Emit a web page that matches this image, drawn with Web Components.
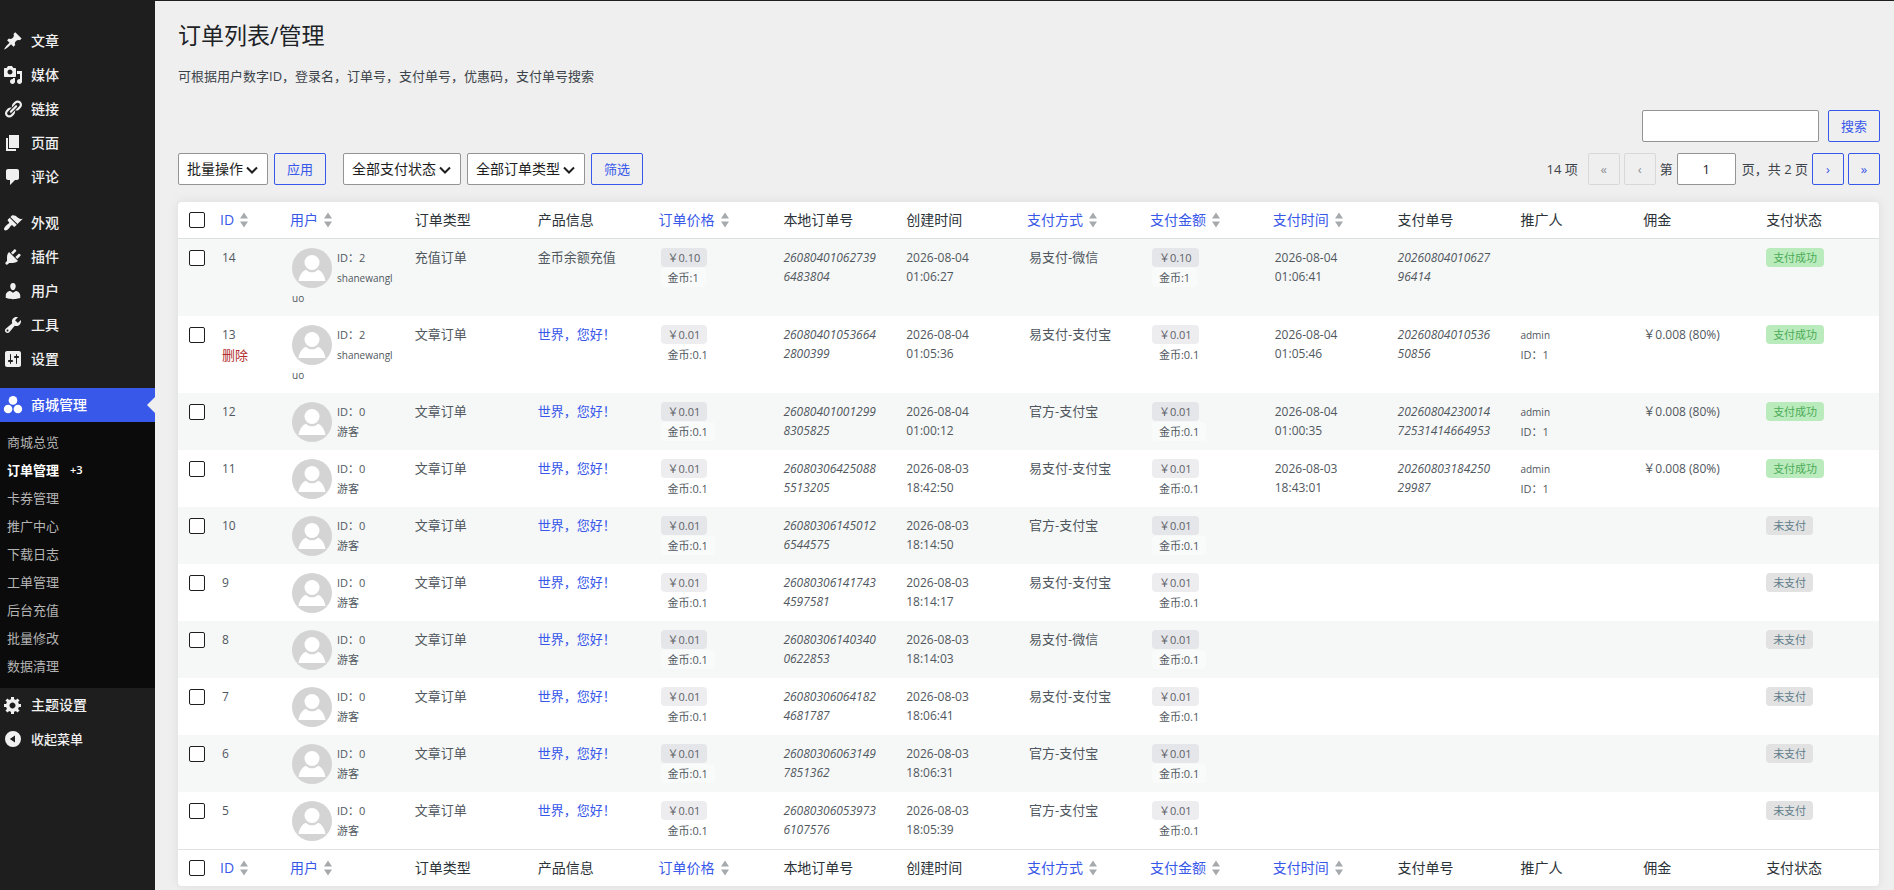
<!DOCTYPE html>
<html lang="zh-CN">
<head>
<meta charset="utf-8">
<meta name="viewport" content="width=device-width, initial-scale=1">
<title>订单列表/管理</title>
<style>
  body {
    margin: 0;
    background: #efefef;
    color: #3c434a;
    font: 13px/20px "Open Sans", "Noto Sans CJK SC", sans-serif;
  }
</style>
</head>
<body>
<admin-shell>
  <admin-menu slot="menu"></admin-menu>
  <page-header heading="订单列表/管理">可根据用户数字ID，登录名，订单号，支付单号，优惠码，支付单号搜索</page-header>
  <search-box></search-box>
  <order-toolbar></order-toolbar>
  <order-table></order-table>
</admin-shell>

<script>
/* Общие стили контролов */
const controls = `
  *, *::before { box-sizing: border-box; }
  button, input, select { font: inherit; margin: 0; }
  button {
    height: 32px;
    padding: 0 12px;
    border: 1px solid #3858e9;
    border-radius: 2px;
    background: transparent;
    color: #3858e9;
    cursor: pointer;
  }
  button:disabled { border-color: #d8d8da; color: #8e9297; cursor: default; }
  input[type=text], input[type=search], select {
    height: 32px;
    border: 1px solid #949494;
    border-radius: 2px;
    background: #fff;
    color: #1e1e1e;
  }
`;

const icons = {
  post: '<path d="M10.44 3.02l1.82-1.82 6.36 6.35-1.83 1.82c-1.05-.68-2.48-.57-3.41.36l-.75.75c-.92.93-1.04 2.35-.35 3.41l-1.83 1.82-2.41-2.41-2.8 2.79c-.42.42-3.38 2.71-3.8 2.29s1.86-3.39 2.28-3.81l2.79-2.79L4.1 9.36l1.83-1.82c1.05.69 2.48.57 3.4-.36l.75-.75c.93-.92 1.05-2.35.36-3.41z"/>',
  media: '<path d="M13 11V4c0-.55-.45-1-1-1h-1.67L9 1H5L3.67 3H2c-.55 0-1 .45-1 1v7c0 .55.45 1 1 1h10c.55 0 1-.45 1-1zM7 4.5c1.38 0 2.5 1.12 2.5 2.5S8.38 9.5 7 9.5 4.5 8.38 4.5 7 5.62 4.5 7 4.5zM14 6h5v10.5c0 1.38-1.12 2.5-2.5 2.5S14 17.88 14 16.5s1.12-2.5 2.5-2.5c.17 0 .34.02.5.05V9h-3V6zm-4 8.05V13h2v3.5c0 1.38-1.12 2.5-2.5 2.5S7 17.88 7 16.5 8.12 14 9.5 14c.17 0 .34.02.5.05z"/>',
  links: '<path d="M17.74 2.76c1.68 1.69 1.68 4.41 0 6.1l-1.53 1.52c-1.12 1.12-2.7 1.47-4.14 1.09l2.62-2.61.76-.77.76-.76c.84-.84.84-2.2 0-3.04-.84-.85-2.2-.85-3.04 0l-.77.76-3.38 3.38c-.37-1.44-.02-3.02 1.1-4.14l1.52-1.53c1.69-1.68 4.42-1.68 6.1 0zM8.59 13.43l5.34-5.34c.42-.42.42-1.1 0-1.52-.44-.43-1.13-.39-1.53 0l-5.33 5.34c-.42.42-.42 1.1 0 1.52.44.43 1.13.39 1.52 0zm-.76 2.29l4.14-4.15c.38 1.44.03 3.02-1.09 4.14l-1.52 1.53c-1.69 1.68-4.41 1.68-6.1 0-1.68-1.68-1.68-4.42 0-6.1l1.53-1.52c1.12-1.12 2.7-1.47 4.14-1.1l-4.14 4.15c-.85.84-.85 2.2 0 3.05.84.84 2.2.84 3.04 0z"/>',
  page: '<path d="M6 15V2h10v13H6zm-1 1h8v2H3V5h2v11z"/>',
  comments: '<path d="M5 2h9c1.1 0 2 .9 2 2v7c0 1.1-.9 2-2 2h-2l-5 5v-5H5c-1.1 0-2-.9-2-2V4c0-1.1.9-2 2-2z"/>',
  appearance: '<path d="M14.48 11.06L7.41 3.99l1.5-1.5c.5-.56 2.3-.47 3.51.32 1.21.8 1.43 1.28 2.91 2.1 1.18.64 2.45 1.26 4.45.85zm-.71.71L6.7 4.7 4.93 6.47c-.39.39-.39 1.02 0 1.41l1.06 1.06c.39.39.39 1.03 0 1.42-.6.6-1.43 1.11-2.21 1.69-.35.26-.7.53-1.01.84C1.43 14.23.4 16.08 1.4 17.07c.99 1 2.84-.03 4.18-1.36.31-.31.58-.66.85-1.02.57-.78 1.08-1.61 1.69-2.21.39-.39 1.02-.39 1.41 0l1.06 1.06c.39.39 1.02.39 1.41 0z"/>',
  plugins: '<path d="M13.11 4.36L9.87 7.6 8 5.73l3.24-3.24c.35-.34 1.05-.2 1.56.32.52.51.66 1.21.31 1.55zm-8 1.77l.91-1.12 9.01 9.01-1.19.84c-.71.71-2.63 1.16-3.82 1.16H6.14L4.9 17.26c-.59.59-1.54.59-2.12 0-.59-.58-.59-1.53 0-2.12l1.24-1.24v-3.88c0-1.13.4-3.19 1.09-3.89zm7.26 3.97l3.24-3.24c.34-.35 1.04-.21 1.55.31.52.51.66 1.21.31 1.55l-3.24 3.25z"/>',
  users: '<path d="M10 9.25c-2.27 0-2.73-3.44-2.73-3.44C7 4.02 7.82 2 9.97 2c2.16 0 2.98 2.02 2.71 3.81 0 0-.41 3.44-2.68 3.44zm0 2.57L12.72 10c2.39 0 4.52 2.33 4.52 4.53v2.49s-3.65 1.13-7.24 1.13c-3.65 0-7.24-1.13-7.24-1.13v-2.49c0-2.25 1.94-4.48 4.47-4.48z"/>',
  tools: '<path d="M16.68 9.77c-1.34 1.34-3.3 1.67-4.95.99l-5.41 6.52c-.99.99-2.59.99-3.58 0s-.99-2.59 0-3.57l6.52-5.42c-.68-1.65-.35-3.61.99-4.95 1.28-1.28 3.12-1.62 4.72-1.06l-2.89 2.89 2.82 2.82 2.86-2.87c.53 1.58.18 3.39-1.08 4.65zM3.81 16.21c.4.39 1.04.39 1.43 0 .4-.4.4-1.04 0-1.43-.39-.4-1.03-.4-1.43 0-.39.39-.39 1.03 0 1.43z"/>',
  settings: '<path d="M18 16V4c0-1.1-.9-2-2-2H4c-1.1 0-2 .9-2 2v12c0 1.1.9 2 2 2h12c1.1 0 2-.9 2-2zM8 11h1c.55 0 1 .45 1 1s-.45 1-1 1H8v1.5c0 .28-.22.5-.5.5s-.5-.22-.5-.5V13H6c-.55 0-1-.45-1-1s.45-1 1-1h1V5.5c0-.28.22-.5.5-.5s.5.22.5.5V11zm5-2h-1c-.55 0-1-.45-1-1s.45-1 1-1h1V5.5c0-.28.22-.5.5-.5s.5.22.5.5V7h1c.55 0 1 .45 1 1s-.45 1-1 1h-1v5.500c0 .28-.22.5-.5.5s-.5-.22-.5-.5V9z"/>',
  shop: '<circle cx="10" cy="5.4" r="4.3"/><circle cx="5.1" cy="14" r="4.3"/><circle cx="14.9" cy="14" r="4.3"/>',
  generic: '<path d="M18 12h-2.18c-.17.7-.44 1.35-.81 1.93l1.54 1.54-2.1 2.1-1.54-1.54c-.58.36-1.23.63-1.91.79V19H8v-2.18c-.68-.16-1.33-.43-1.91-.79l-1.54 1.54-2.12-2.12 1.54-1.54c-.36-.58-.63-1.23-.79-1.91H1V9.03h2.17c.16-.7.44-1.35.8-1.94L2.43 5.55l2.1-2.1 1.54 1.54c.58-.37 1.24-.64 1.93-.81V2h3v2.18c.68.16 1.33.43 1.91.79l1.54-1.54 2.12 2.12-1.54 1.54c.36.59.64 1.24.8 1.94H18V12zm-8.500 1.500c1.66 0 3-1.34 3-3s-1.34-3-3-3-3 1.34-3 3 1.34 3 3 3z"/>',
  collapse: '<path fill-rule="evenodd" d="M10 2a8 8 0 1 0 0 16 8 8 0 0 0 0-16zm2 4.6v6.8L6.8 10z"/>',
};

const define = (name, html, setup) => {
  const template = document.createElement('template');
  template.innerHTML = html;
  customElements.define(name, class extends HTMLElement {
    constructor() {
      super();
      this.attachShadow({ mode: 'open' }).append(template.content.cloneNode(true));
    }
    connectedCallback() {
      setup?.(this, this.shadowRoot);
    }
  });
};

define('admin-shell', `
  <style>
    :host { display: flex; min-height: 100vh; box-sizing: border-box; border-top: 1px solid #1e1e1e; }
    aside { flex: none; width: 155px; background: #1e1e1e; }
    main { flex: 1; min-width: 0; padding: 19px 14px 0 23px; }
  </style>
  <aside><slot name="menu"></slot></aside>
  <main><slot></slot></main>
`);

define('menu-item', `
  <style>
    :host { display: block; }
    a {
      position: relative;
      display: flex;
      align-items: center;
      gap: 8px;
      height: 34px;
      padding-left: 3px;
      color: #f0f0f1;
      font-size: 14px;
      font-weight: 500;
      text-decoration: none;
    }
    svg { width: 20px; height: 20px; fill: currentColor; }
    :host([current]) a { background: #3858e9; color: #fff; }
    :host([current]) a::after {
      content: "";
      position: absolute;
      right: 0;
      border: 8px solid transparent;
      border-right-color: #efefef;
      border-left: 0;
    }
    :host([plain]) a { font-size: 13px; }
  </style>
  <a href="#"><svg viewBox="0 0 20 20" aria-hidden="true"></svg><slot></slot></a>
`, (el, root) => {
  root.querySelector('svg').innerHTML = icons[el.getAttribute('icon')] || '';
});

define('submenu-item', `
  <style>
    :host { display: block; }
    a {
      display: flex;
      align-items: center;
      gap: 11px;
      height: 28px;
      padding-left: 7px;
      color: #b4b4b4;
      text-decoration: none;
    }
    :host([current]) a { color: #fff; font-weight: 700; }
    ::slotted(small) { font-size: 11px; font-weight: 600; }
  </style>
  <a href="#"><slot></slot><slot name="count"></slot></a>
`);

define('admin-menu', `
  <style>
    :host { display: block; padding-top: 23px; }
    hr { height: 12px; margin: 0; border: 0; }
    .submenu { padding: 6px 0 8px; background: #0b0b0b; }
  </style>
  <nav aria-label="主菜单">
    <menu-item icon="post">文章</menu-item>
    <menu-item icon="media">媒体</menu-item>
    <menu-item icon="links">链接</menu-item>
    <menu-item icon="page">页面</menu-item>
    <menu-item icon="comments">评论</menu-item>
    <hr>
    <menu-item icon="appearance">外观</menu-item>
    <menu-item icon="plugins">插件</menu-item>
    <menu-item icon="users">用户</menu-item>
    <menu-item icon="tools">工具</menu-item>
    <menu-item icon="settings">设置</menu-item>
    <hr>
    <menu-item icon="shop" current>商城管理</menu-item>
    <div class="submenu">
      <submenu-item>商城总览</submenu-item>
      <submenu-item current>订单管理<small slot="count">+3</small></submenu-item>
      <submenu-item>卡券管理</submenu-item>
      <submenu-item>推广中心</submenu-item>
      <submenu-item>下载日志</submenu-item>
      <submenu-item>工单管理</submenu-item>
      <submenu-item>后台充值</submenu-item>
      <submenu-item>批量修改</submenu-item>
      <submenu-item>数据清理</submenu-item>
    </div>
    <menu-item icon="generic">主题设置</menu-item>
    <menu-item icon="collapse" plain>收起菜单</menu-item>
  </nav>
`);

define('page-header', `
  <style>
    :host { display: block; }
    h1 { margin: 0; color: #1d2327; font-size: 23px; line-height: 30px; font-weight: 400; }
    p { margin: 16px 0 0; }
  </style>
  <h1></h1>
  <p><slot></slot></p>
`, (el, root) => {
  root.querySelector('h1').textContent = el.getAttribute('heading');
});

define('search-box', `
  <style>
    ${controls}
    :host { display: block; margin-top: 24px; }
    form { display: flex; justify-content: flex-end; gap: 9px; }
    input { width: 177px; padding: 0 8px; }
  </style>
  <form role="search">
    <input type="search" aria-label="搜索订单">
    <button type="button">搜索</button>
  </form>
`);

define('drop-down', `
  <style>
    ${controls}
    :host { display: inline-block; position: relative; }
    select { appearance: none; padding: 0 24px 0 8px; font-size: 14px; }
    svg {
      position: absolute;
      top: 11px;
      right: 10px;
      width: 12px;
      height: 12px;
      fill: none;
      stroke: #1e1e1e;
      stroke-width: 2;
      pointer-events: none;
    }
  </style>
  <select><option></option></select>
  <svg viewBox="0 0 12 12" aria-hidden="true"><path d="M1 3.500l5 5 5-5"/></svg>
`, (el, root) => {
  root.querySelector('option').textContent = el.getAttribute('value');
  root.querySelector('select').setAttribute('aria-label', el.getAttribute('label'));
});

define('page-nav', `
  <style>
    ${controls}
    :host { display: flex; align-items: center; gap: 4px; }
    .total { margin-right: 6px; }
    button { width: 32px; padding: 0; }
    input { width: 59px; text-align: center; }
    .of { margin-left: 2px; }
  </style>
  <span class="total">14 项</span>
  <button type="button" aria-label="首页" disabled>«</button>
  <button type="button" aria-label="上一页" disabled>‹</button>
  <label for="page">第</label>
  <input type="text" id="page" value="1">
  <span class="of">页，共 2 页</span>
  <button type="button" aria-label="下一页">›</button>
  <button type="button" aria-label="尾页">»</button>
`);

define('order-toolbar', `
  <style>
    ${controls}
    :host { display: flex; justify-content: space-between; margin: 11px 0 17px; }
    div, section { display: flex; gap: 6px; }
    section { gap: 17px; }
  </style>
  <section>
    <div>
      <drop-down label="批量操作" value="批量操作"></drop-down>
      <button type="button">应用</button>
    </div>
    <div>
      <drop-down label="支付状态" value="全部支付状态"></drop-down>
      <drop-down label="订单类型" value="全部订单类型"></drop-down>
      <button type="button">筛选</button>
    </div>
  </section>
  <page-nav></page-nav>
`);

define('tag-chip', `
  <style>
    :host {
      display: table;
      height: 19px;
      padding: 0 7px;
      border-radius: 4px;
      background: rgba(116, 119, 140, .13);
      color: #5d6167;
      font-size: 11px;
      line-height: 19px;
      white-space: nowrap;
    }
    :host([kind=coin]) { margin-top: 1px; background: rgba(255, 255, 255, .4); color: #50575e; }
    :host([kind=paid]) { background: #b9ebbc; color: #4cab58; }
    :host([kind=unpaid]) { background: #e2e2e2; color: #607d8b; }
  </style>
  <slot></slot>
`);

define('user-card', `
  <style>
    :host { display: flow-root; font-size: 11px; line-height: 20px; }
    svg { float: left; width: 40px; height: 40px; margin-right: 5px; }
    .name { word-break: break-all; }
    .latin { font-size: 10px; }
  </style>
  <svg viewBox="0 0 40 40" aria-hidden="true">
    <circle cx="20" cy="20" r="20" fill="#d4d4d4"/>
    <circle cx="20" cy="14.5" r="7.5" fill="#fff"/>
    <path d="M6.5 33c1-5.5 3.8-9.8 7.2-11.2 3.8 3.4 8.8 3.4 12.6 0 3.4 1.4 6.2 5.7 7.2 11.2z" fill="#fff"/>
  </svg>
  <div class="uid"></div>
  <div class="name"></div>
`, (el, root) => {
  const name = root.querySelector('.name');
  root.querySelector('.uid').textContent = 'ID：' + el.getAttribute('uid');
  name.textContent = el.getAttribute('name');
  name.classList.toggle('latin', /^\w+$/.test(name.textContent));
});

/* [заголовок, сортировка] */
const columns = [
  ['ID', 1], ['用户', 1], ['订单类型'], ['产品信息'], ['订单价格', 1], ['本地订单号'], ['创建时间'],
  ['支付方式', 1], ['支付金额', 1], ['支付时间', 1], ['支付单号'], ['推广人'], ['佣金'], ['支付状态'],
];

const orders = [
  { id: 14, uid: 2, price: '0.10', coin: '1', no: '26080401062739 6483804', made: '2026-08-04 01:06:27', pay: '易支付-微信', paid: '2026-08-04 01:06:41', payNo: '20260804010627 96414' },
  { id: 13, uid: 2, no: '26080401053664 2800399', made: '2026-08-04 01:05:36', pay: '易支付-支付宝', paid: '2026-08-04 01:05:46', payNo: '20260804010536 50856', ref: 1 },
  { id: 12, uid: 0, no: '26080401001299 8305825', made: '2026-08-04 01:00:12', pay: '官方-支付宝', paid: '2026-08-04 01:00:35', payNo: '20260804230014 72531414664953', ref: 1 },
  { id: 11, uid: 0, no: '26080306425088 5513205', made: '2026-08-03 18:42:50', pay: '易支付-支付宝', paid: '2026-08-03 18:43:01', payNo: '20260803184250 29987', ref: 1 },
  { id: 10, uid: 0, no: '26080306145012 6544575', made: '2026-08-03 18:14:50', pay: '官方-支付宝' },
  { id: 9, uid: 0, no: '26080306141743 4597581', made: '2026-08-03 18:14:17', pay: '易支付-支付宝' },
  { id: 8, uid: 0, no: '26080306140340 0622853', made: '2026-08-03 18:14:03', pay: '易支付-微信' },
  { id: 7, uid: 0, no: '26080306064182 4681787', made: '2026-08-03 18:06:41', pay: '易支付-支付宝' },
  { id: 6, uid: 0, no: '26080306063149 7851362', made: '2026-08-03 18:06:31', pay: '官方-支付宝' },
  { id: 5, uid: 0, no: '26080306053973 6107576', made: '2026-08-03 18:05:39', pay: '官方-支付宝' },
];

const lines = (text = '') => text.replace(' ', '<br>');

const headRow = () => `
  <tr>
    <th class="check"><input type="checkbox" aria-label="全选"></th>
    ${columns.map(([title, sort]) => sort
      ? `<th class="sort" scope="col"><a href="#">${title}<svg viewBox="0 0 8 16" aria-hidden="true"><path d="M0 6.500l4-6 4 6zM0 9.500h8l-4 6z"/></svg></a></th>`
      : `<th scope="col">${title}</th>`).join('')}
  </tr>`;

const orderRow = (o) => {
  const price = `<tag-chip>￥${o.price || '0.01'}</tag-chip><tag-chip kind="coin">金币:${o.coin || '0.1'}</tag-chip>`;
  const topUp = o.id === 14;
  return `
  <tr>
    <td class="check"><input type="checkbox" aria-label="选择订单 ${o.id}"></td>
    <td><span class="num id">${o.id}</span>${o.id === 13 ? '<a class="delete" href="#">删除</a>' : ''}</td>
    <td><user-card uid="${o.uid}" name="${o.uid ? 'shanewangluo' : '游客'}"></user-card></td>
    <td>${topUp ? '充值订单' : '文章订单'}</td>
    <td>${topUp ? '金币余额充值' : '<a href="#">世界，您好！</a>'}</td>
    <td>${price}</td>
    <td class="num"><em>${lines(o.no)}</em></td>
    <td class="num">${lines(o.made)}</td>
    <td>${o.pay}</td>
    <td>${price}</td>
    <td class="num">${lines(o.paid)}</td>
    <td class="num"><em>${lines(o.payNo)}</em></td>
    <td class="ref">${o.ref ? '<span>admin</span><br>ID：1' : ''}</td>
    <td class="num">${o.ref ? '￥0.008 (80%)' : ''}</td>
    <td><tag-chip kind="${o.paid ? 'paid' : 'unpaid'}">${o.paid ? '支付成功' : '未支付'}</tag-chip></td>
  </tr>`;
};

define('order-table', `
  <style>
    :host {
      display: block;
      overflow: hidden;
      margin-right: 1px;
      border-radius: 4px;
      background: #fff;
      box-shadow: 0 0 10px rgba(116, 116, 116, .15);
    }
    table { width: 100%; border-collapse: separate; border-spacing: 0; table-layout: fixed; color: #50575e; }
    .c-check { width: 34px; }
    .c-id { width: 70px; }
    th {
      height: 36px;
      padding: 0 10px;
      color: #2c3338;
      font-size: 14px;
      font-weight: 400;
      text-align: left;
      white-space: nowrap;
    }
    thead th { border-bottom: 1px solid #dcdfe0; }
    tfoot th { border-top: 1px solid #e0e2e3; }
    th.sort { padding: 0 8px; }
    th a { display: flex; align-items: center; gap: 6px; }
    th svg { flex: none; width: 8px; height: 16px; fill: #a7aaad; }
    td { padding: 9px 10px 8px; line-height: 19px; vertical-align: top; }
    tbody tr:nth-child(odd) { background: #f6f7f7; }
    a { color: #3858e9; text-decoration: none; }
    .num { font-size: 12px; }
    .id { display: block; font-weight: 500; }
    .delete { display: block; margin-top: 2px; color: #b32d2e; }
    .ref { font-size: 11px; line-height: 20px; }
    .ref span { font-size: 10px; }
    .check { padding-left: 11px; padding-right: 0; }
    td.check { padding-top: 11px; }
    input {
      display: block;
      appearance: none;
      box-sizing: border-box;
      width: 16px;
      height: 16px;
      margin: 0;
      border: 1px solid #1e1e1e;
      border-radius: 2px;
      background: #fff;
    }
  </style>
  <table>
    <colgroup><col class="c-check"><col class="c-id"><col span="13"></colgroup>
    <thead></thead>
    <tbody></tbody>
    <tfoot></tfoot>
  </table>
`, (el, root) => {
  root.querySelector('thead').innerHTML = headRow();
  root.querySelector('tbody').innerHTML = orders.map(orderRow).join('');
  root.querySelector('tfoot').innerHTML = headRow();
});
</script>
</body>
</html>
